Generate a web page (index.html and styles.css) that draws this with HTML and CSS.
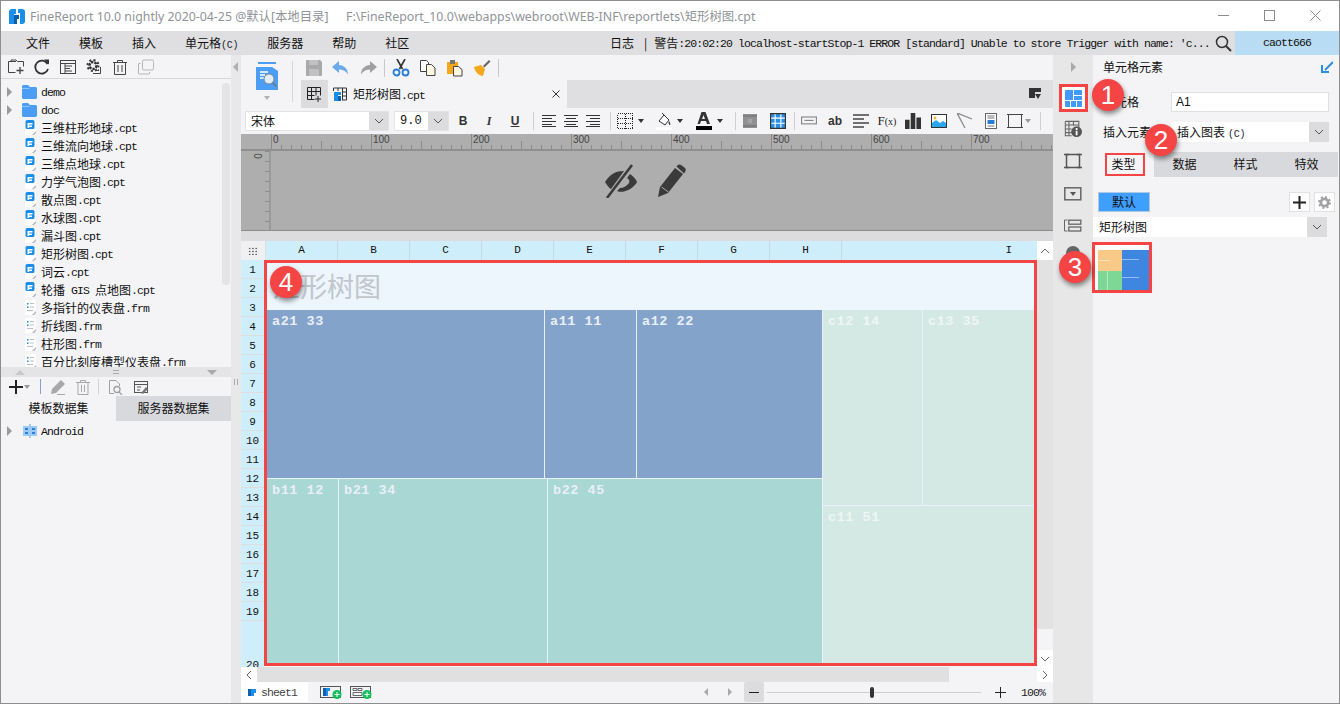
FILE: index.html
```html
<!DOCTYPE html>
<html lang="zh">
<head>
<meta charset="utf-8">
<title>FineReport</title>
<link rel="stylesheet" href="styles.css">
</head>
<body>
<svg class="defs" aria-hidden="true">
  <symbol id="cpt" viewBox="0 0 13 16"><path d="M1 0h11v12l-3 3H1z" fill="#fff"/><path d="M12 11v2l-2 2H8z" fill="#b5b5b5"/><rect x="1.500" y="0" width="9" height="9" rx="1.500" fill="#1a8ee8"/><path d="M3.500 8V3h5v1.500H5.200V5.500H8V7H5.200v1z" fill="#fff"/></symbol>
  <symbol id="frm" viewBox="0 0 13 16"><path d="M1 0h11v12l-3 3H1z" fill="#fff"/><path d="M12 11v2l-2 2H8z" fill="#b5b5b5"/><path d="M3 3h1.500v1.500H3zM3 6.500h1.500V8H3z" fill="#1a8ee8"/><path d="M6 3h4v1H6zM6 6.500h4v1H6zM3 10h6v1H3z" fill="#b9c2cc"/></symbol>
  <symbol id="folder" viewBox="0 0 15 14"><path d="M0 1.500C0 .7.700 0 1.500 0H6l2 2h5.500c.8 0 1.500.7 1.500 1.500V12.500c0 .8-.7 1.500-1.500 1.500h-12C.7 14 0 13.300 0 12.500z" fill="#4c9ef5"/><path d="M0 3h8l-1 1H0z" fill="#90c4fa"/></symbol>
  <symbol id="chev" viewBox="0 0 10 6"><path d="M1 1l4 4 4-4" fill="none" stroke="#555" stroke-width="1"/></symbol>
  <symbol id="tri" viewBox="0 0 6 4"><path d="M0 0h6L3 4z" fill="#333"/></symbol>
  <symbol id="gridplus" viewBox="0 0 16 16"><path d="M1.500 1.500h13v8M1.500 1.500v12h7M1.500 5.500h13M5.500 1.500v12M10 1.500v8M1.500 9.500h7" fill="none" stroke="#222" stroke-width="1"/><path d="M12 10v6M9 13h6" stroke="#222" stroke-width="1"/></symbol>
</svg>
<div class="app">
  <header class="titlebar">
    <svg class="logo" viewBox="0 0 16 15"><path d="M0 3a3 3 0 0 1 3-3h4v5H5v10H0z" fill="#1a8ee8"/><path d="M5 6h5v4H8v5H5z" fill="#0f5fb0"/><path d="M9 0h4a3 3 0 0 1 3 3v9a3 3 0 0 1-3 3h-2V4H9z" fill="#1a8ee8"/></svg>
    <span class="apptitle">FineReport 10.0 nightly 2020-04-25 @默认[本地目录]</span>
    <span class="apppath">F:\FineReport_10.0\webapps\webroot\WEB-INF\reportlets\矩形树图.cpt</span>
    <div class="winbtns">
      <svg viewBox="0 0 11 11"><path d="M0 5.500h11" stroke="#8c8c8c"/></svg>
      <svg viewBox="0 0 11 11"><rect x=".5" y=".5" width="10" height="10" fill="none" stroke="#8c8c8c"/></svg>
      <svg viewBox="0 0 11 11"><path d="M.5.500l10 10M10.500.500l-10 10" stroke="#8c8c8c"/></svg>
    </div>
  </header>

  <nav class="menubar">
    <div class="menu">
      <span>文件</span><span>模板</span><span>插入</span><span>单元格<b class="m10">(C)</b></span><span>服务器</span><span>帮助</span><span>社区</span>
    </div>
    <div class="log">日志<i class="bar">|</i>警告<b class="m logm">:20:02:20 localhost-startStop-1 ERROR [standard] Unable to store Trigger with name: 'c...</b></div>
    <svg class="search" viewBox="0 0 17 17"><circle cx="7" cy="7" r="5.500" fill="none" stroke="#333" stroke-width="1.500"/><path d="M11 11l5 5" stroke="#333" stroke-width="2"/></svg>
    <div class="user m">caott666</div>
  </nav>

  <main class="main">
    <aside class="left">
      <div class="ltools">
        <svg viewBox="0 0 18 18"><path d="M9 3.500H1.500v11h7M4 3.500V2h5l1.500 1.500h6v5" fill="none" stroke="#444"/><path d="M13 9v7M9.500 12.500h7" stroke="#444" stroke-width="1.300"/></svg>
        <svg viewBox="0 0 18 18"><path d="M14.500 6A6.500 6.500 0 1 0 15 11" fill="none" stroke="#333" stroke-width="1.800"/><path d="M11 1.500h5v5z" fill="#333"/></svg>
        <svg viewBox="0 0 18 18"><rect x="1.500" y="2.500" width="15" height="13" fill="none" stroke="#444"/><path d="M1.500 5.500h15M6 8h7M6 10.500h5M6 13h7M6 5.500v10" fill="none" stroke="#444"/></svg>
        <svg viewBox="0 0 18 18"><circle cx="8" cy="7.500" r="3.500" fill="none" stroke="#333" stroke-width="2.500" stroke-dasharray="2.500 1"/><circle cx="8" cy="7.500" r="5.500" fill="none" stroke="#333" stroke-width="2" stroke-dasharray="2 2.300"/><path d="M15.500 9v6.500H8" fill="none" stroke="#444"/><path d="M11 13h3v-2z" fill="#444"/></svg>
        <svg viewBox="0 0 18 18"><path d="M2 4.500h14M6.500 4.500V2.500h5v2M3.500 4.500v12h11v-12M7 7v7M11 7v7" fill="none" stroke="#444"/></svg>
        <svg viewBox="0 0 18 18"><rect x="5.500" y="2" width="11" height="10" rx="1.500" fill="none" stroke="#b5b5b8"/><path d="M3.500 5.500H2A.5.500 0 0 0 1.500 6v9.500a.5.500 0 0 0 .5.500h10a.5.500 0 0 0 .5-.5V14" fill="none" stroke="#b5b5b8"/></svg>
      </div>
      <div class="tree">
        <div class="thumb"></div>
        <div class="row"><i class="arrow"></i><svg class="fold"><use href="#folder"/></svg><b class="m">demo</b></div>
        <div class="row"><i class="arrow"></i><svg class="fold"><use href="#folder"/></svg><b class="m">doc</b></div>
        <div class="row"><svg class="fi"><use href="#cpt"/></svg>三维柱形地球<b class="m">.cpt</b></div>
        <div class="row"><svg class="fi"><use href="#cpt"/></svg>三维流向地球<b class="m">.cpt</b></div>
        <div class="row"><svg class="fi"><use href="#cpt"/></svg>三维点地球<b class="m">.cpt</b></div>
        <div class="row"><svg class="fi"><use href="#cpt"/></svg>力学气泡图<b class="m">.cpt</b></div>
        <div class="row"><svg class="fi"><use href="#cpt"/></svg>散点图<b class="m">.cpt</b></div>
        <div class="row"><svg class="fi"><use href="#cpt"/></svg>水球图<b class="m">.cpt</b></div>
        <div class="row"><svg class="fi"><use href="#cpt"/></svg>漏斗图<b class="m">.cpt</b></div>
        <div class="row"><svg class="fi"><use href="#cpt"/></svg>矩形树图<b class="m">.cpt</b></div>
        <div class="row"><svg class="fi"><use href="#cpt"/></svg>词云<b class="m">.cpt</b></div>
        <div class="row"><svg class="fi"><use href="#cpt"/></svg>轮播<b class="m"> GIS </b>点地图<b class="m">.cpt</b></div>
        <div class="row"><svg class="fi"><use href="#frm"/></svg>多指针的仪表盘<b class="m">.frm</b></div>
        <div class="row"><svg class="fi"><use href="#frm"/></svg>折线图<b class="m">.frm</b></div>
        <div class="row"><svg class="fi"><use href="#frm"/></svg>柱形图<b class="m">.frm</b></div>
        <div class="row"><svg class="fi"><use href="#frm"/></svg>百分比刻度槽型仪表盘<b class="m">.frm</b></div>
      </div>
      <div class="lsplit"><i class="up"></i><i class="dash"></i><i class="down"></i></div>
      <div class="ltools2">
        <svg class="w14" viewBox="0 0 14 14"><path d="M7 0v14M0 7h14" stroke="#222" stroke-width="2"/></svg>
        <svg class="w7" viewBox="0 0 6 4"><path d="M0 0h6L3 4z" fill="#999"/></svg>
        <i class="vsep a"></i>
        <svg class="w16 b" viewBox="0 0 16 16"><path d="M1 15l1-5L11 1l4 4-9 9z" fill="#a8a8ab"/><path d="M7 15.500h8" stroke="#a8a8ab"/></svg>
        <svg class="w16 c" viewBox="0 0 16 16"><path d="M1 3.500h14M5.500 3.500V1.500h5v2M3 3.500v12h10v-12M6.500 6v7M9.500 6v7" fill="none" stroke="#a8a8ab"/></svg>
        <i class="vsep d"></i>
        <svg class="w16 e" viewBox="0 0 16 16"><path d="M9 1.500H2.500v13H7M9 1.500l3.500 3.500v2" fill="none" stroke="#a0a0a3"/><circle cx="10" cy="10.500" r="3" fill="none" stroke="#a0a0a3" stroke-width="1.300"/><path d="M12 13l3 3" stroke="#a0a0a3" stroke-width="1.300"/></svg>
        <svg class="w16 f" viewBox="0 0 16 16"><rect x="1.500" y="2.500" width="13" height="11" fill="none" stroke="#555"/><path d="M1.500 5.500h13M4 8h4M4 11h3" stroke="#555"/><path d="M8 14l5-6 2 2-5 5z" fill="#777"/></svg>
      </div>
      <div class="ltabs"><span class="on">模板数据集</span><span>服务器数据集</span></div>
      <div class="dsrow"><i class="arrow"></i><svg class="ds" viewBox="0 0 14 14"><path d="M7 0v14" stroke="#4c9ef5"/><path d="M0 2h14v10H0z" fill="#9ccbfa"/><path d="M2 4h3v2H2zM2 8h3v2H2zM9 4h3v2H9zM9 8h3v2H9z" fill="#2d7fd8"/></svg><b class="m">Android</b></div>
    </aside>

    <div class="vsplit"><i class="lefttri"></i><i class="grip"></i></div>

    <section class="center">
      <div class="top">
        <div class="bigcol">
          <svg class="bigic" viewBox="0 0 22 28"><path d="M2 0h18v2H2z" fill="#4c9ef5"/><path d="M0 5h16l6 4v19H0z" fill="#4c9ef5"/><path d="M4 10h8M4 13h5M4 16h4" stroke="#fff" stroke-width="1.300"/><circle cx="13" cy="17" r="5" fill="#e3edf5" stroke="#7d8791"/><path d="M16.500 20.500l4 4" stroke="#6d7781" stroke-width="1.500"/></svg>
          <svg class="bigtri" viewBox="0 0 6 4"><path d="M0 0h6L3 4z" fill="#b2b2b5"/></svg>
        </div>
        <i class="bigsep"></i>
        <div class="toprows">
          <div class="tools">
            <svg viewBox="0 0 18 18"><path d="M1 2a1 1 0 0 1 1-1h13l2 2v13a1 1 0 0 1-1 1H2a1 1 0 0 1-1-1z" fill="#a9a9ab"/><path d="M4 1h9v5H4zM4 10h10v7H4z" fill="#c1c1c3"/></svg>
            <svg viewBox="0 0 18 18"><path d="M7 2L0 8l7 6v-3.500c4 0 7 1.500 9 5 0-6-4-9-9-9.500z" fill="#6da9e6"/></svg>
            <svg viewBox="0 0 18 18"><path d="M11 2l7 6-7 6v-3.500c-4 0-7 1.500-9 5 0-6 4-9 9-9.500z" fill="#a0a0a3"/></svg>
            <i class="toolsep"></i>
            <svg viewBox="0 0 18 18"><path d="M5 0l5.500 10M13 0L7.500 10" stroke="#333" stroke-width="1.600"/><circle cx="4.500" cy="13.500" r="3" fill="none" stroke="#2a7dd6" stroke-width="1.800"/><circle cx="13.500" cy="13.500" r="3" fill="none" stroke="#2a7dd6" stroke-width="1.800"/></svg>
            <svg viewBox="0 0 18 18"><path d="M1.500 1.500h6l2 2v9h-8z" fill="#fff" stroke="#444"/><path d="M7.500 5.500h5l3.500 3.500v7.500H7.500z" fill="#fdf6e3" stroke="#444"/></svg>
            <svg viewBox="0 0 18 18"><path d="M1 3h11v12H1z" fill="#f3a81c"/><path d="M4 1h5v4H4z" fill="#777"/><path d="M7.500 7.500h5l3.500 3v6.500H7.500z" fill="#fdf6e3" stroke="#444"/></svg>
            <svg viewBox="0 0 18 18"><path d="M1 8l7-2 4 4-2 7C6 17 2 13 1 8z" fill="#f3a81c"/><path d="M10 7l6-6 1.500 1.500-6 6z" fill="#666"/></svg>
            <i class="toolsep"></i>
          </div>
          <div class="tabs">
            <div class="newtab"><svg><use href="#gridplus"/></svg></div>
            <div class="tab">
              <svg class="tabic" viewBox="0 0 14 14"><path d="M.5 1h13v12H.5zM.5 5h13M.5 9h13M5 1v12M9.500 1v12" fill="none" stroke="#333"/><rect x="0" y="4" width="9" height="10" fill="#f4f4f7"/><path d="M1 14V5h7v3H5v6z" fill="#1a8ee8"/><path d="M5 9h3v5H5z" fill="#0f5fb0"/></svg>
              <span class="tabname">矩形树图<b class="m">.cpt</b></span>
              <svg class="tabx" viewBox="0 0 8 8"><path d="M.5.500l7 7M7.500.500l-7 7" stroke="#333"/></svg>
            </div>
            <svg class="tabmenu" viewBox="0 0 12 12"><path d="M0 0h12v4H6v6H0z" fill="#333"/><path d="M6 6h6l-3 5z" fill="#333"/></svg>
          </div>
        </div>
      </div>

      <div class="format">
        <div class="sel f1"><span>宋体</span><i><svg><use href="#chev"/></svg></i></div>
        <div class="sel f2"><span class="m mono2">9.0</span><i><svg><use href="#chev"/></svg></i></div>
        <span class="c26 txt">B</span>
        <span class="c26 txt it">I</span>
        <span class="c26 txt un">U</span>
        <i class="fsep s10"></i>
        <span class="c22"><svg viewBox="0 0 14 12"><path d="M0 .5h14M0 3.500h10M0 6.500h14M0 9.500h10M0 11.500h14" stroke="#333"/></svg></span>
        <span class="c22"><svg viewBox="0 0 14 12"><path d="M0 .5h14M2 3.500h10M0 6.500h14M2 9.500h10M0 11.500h14" stroke="#333"/></svg></span>
        <span class="c22"><svg viewBox="0 0 14 12"><path d="M0 .5h14M4 3.500h10M0 6.500h14M4 9.500h10M0 11.500h14" stroke="#333"/></svg></span>
        <i class="fsep s12"></i>
        <span class="c18"><svg viewBox="0 0 16 16" shape-rendering="crispEdges"><rect x=".5" y=".5" width="15" height="15" fill="none" stroke="#222" stroke-dasharray="1 1"/><path d="M.5 5.500h15M.5 10.500h15M8 .5v15" stroke="#222" stroke-dasharray="1 1"/></svg></span>
        <span class="c14"><svg class="t"><use href="#tri"/></svg></span>
        <span class="c18 ml7"><svg viewBox="0 0 16 18"><path d="M3 9l5-6 5 5-4 5z" fill="#fff" stroke="#333"/><path d="M6 1l2 2" stroke="#333"/><path d="M13 9c1 2 2 3 1 4-1 0-2-2-1-4z" fill="#333"/><path d="M0 15h16v3H0z" fill="#fff"/></svg></span>
        <span class="c14"><svg class="t"><use href="#tri"/></svg></span>
        <span class="c18 ml8"><svg viewBox="0 0 16 18"><path d="M5.500 0h4L14 12h-3l-1-3H5l-1 3H1.500zM6 7h3L7.500 3z" fill="#333"/><path d="M0 14h16v4H0z" fill="#000"/></svg></span>
        <span class="c14"><svg class="t"><use href="#tri"/></svg></span>
        <i class="fsep s16"></i>
        <span class="c14"><svg viewBox="0 0 14 14"><rect width="14" height="14" fill="#909093"/><path d="M0 2h14M0 12h14" stroke="#6f6f72"/><path d="M5 5h4v4H5z" fill="#a5a5a8"/></svg></span>
        <span class="c28 ml7"><svg viewBox="0 0 14 14"><path d="M0 0h14v14H0z" fill="#2b90e5"/><path d="M0 4.500h14M0 9h14M4.500 0v14M9.500 0v14" stroke="#fff"/><path d="M.5.500h13v13H.5z" fill="none" stroke="#333"/></svg></span>
        <i class="fsep s4"></i>
        <span class="c26"><svg viewBox="0 0 14 8"><rect x=".5" y=".5" width="13" height="6" fill="none" stroke="#888"/><path d="M3 3.500h8" stroke="#888"/></svg></span>
        <span class="c26 txt ab">ab</span>
        <span class="c26"><svg viewBox="0 0 16 14"><path d="M0 1h16M0 5h11M0 9h16M0 13h11" stroke="#444" stroke-width="1.600"/></svg></span>
        <span class="c26 fx">F<small>(x)</small></span>
        <span class="c26"><svg viewBox="0 0 14 14"><path d="M0 6h4v8H0zM5 0h4v14H5zM10 4h4v10h-4z" fill="#333"/></svg></span>
        <span class="c26"><svg viewBox="0 0 16 14"><rect x=".5" y=".5" width="15" height="13" fill="#fdfdfd" stroke="#333"/><path d="M1 13V9l4-3 4 3 3-2 3 2v4z" fill="#2aa7ee"/><circle cx="4" cy="4" r="1.500" fill="#f3b93d"/></svg></span>
        <span class="c26"><svg viewBox="0 0 16 16"><path d="M0 0l15 6M0 0l8 15" fill="none" stroke="#8a8a8c" stroke-width="1.300"/></svg></span>
        <span class="c26"><svg viewBox="0 0 12 16"><rect x=".5" y=".5" width="11" height="15" fill="#fff" stroke="#666"/><path d="M2.500 3h7M2.500 5h7" stroke="#777"/><path d="M2.500 7h7v4h-7z" fill="#2a7dd6"/><path d="M2.500 13h7" stroke="#777"/></svg></span>
        <span class="c30"><svg class="bord" viewBox="0 0 16 16"><rect x="1.500" y="1.500" width="13" height="13" fill="none" stroke="#444"/><path d="M0 1.500h3M13 1.500h3M0 14.500h3M13 14.500h3" stroke="#444"/></svg><svg class="t g" viewBox="0 0 6 4"><path d="M0 0h6L3 4z" fill="#999"/></svg></span>
        <i class="fsep s12"></i>
      </div>

      <div class="ruler">
        <span>0</span><span>100</span><span>200</span><span>300</span><span>400</span><span>500</span><span>600</span><span>700</span>
      </div>
      <div class="page">
        <div class="vruler"><span>0</span></div>
        <div class="pageicons">
          <svg viewBox="0 0 34 34"><path d="M1 18c5-8 11-11 19-11l-13 18c-2-1-4-4-6-7zM13 27c2 1 5 1 7 .5C26 26 31 22 33 18c-1-3-4-6-7-8l-3 4c2 1 3 3 2 5-2 3-6 5-9 5z" fill="#3a3a3a"/><path d="M3 34L28 1" stroke="#3a3a3a" stroke-width="2.500"/></svg>
          <svg viewBox="0 0 30 34"><path d="M0 33l2-10L17 4l8 6L10 29z" fill="#3a3a3a"/><path d="M18.500 2.500a3 3 0 0 1 4.500-1.500l3.500 2.500a3 3 0 0 1 .5 4.500L26 9.500z" fill="#3a3a3a"/><path d="M3.500 23l7 5" stroke="#aeaeae"/></svg>
        </div>
      </div>

      <div class="sheet">
        <div class="headrow">
          <div class="corner"><i></i></div>
          <div class="cols"><span>A</span><span>B</span><span>C</span><span>D</span><span>E</span><span>F</span><span>G</span><span>H</span><span class="last">I</span></div>
          <div class="sb-btn"><svg viewBox="0 0 10 6"><path d="M1 5l4-4 4 4" fill="none" stroke="#666"/></svg></div>
        </div>
        <div class="bodyrow">
          <div class="rows"><span>1</span><span>2</span><span>3</span><span>4</span><span>5</span><span>6</span><span>7</span><span>8</span><span>9</span><span>10</span><span>11</span><span>12</span><span>13</span><span>14</span><span>15</span><span>16</span><span>17</span><span>18</span><span>19</span><span class="tall">20</span></div>
          <div class="chart">
            <div class="ctitle">矩形树图</div>
            <div class="map">
              <div class="mapl">
                <div class="tr1">
                  <div class="n a w277">a21 33</div>
                  <div class="n a w91">a11 11</div>
                  <div class="n a w185">a12 22</div>
                </div>
                <div class="tr2">
                  <div class="n bb w71">b11 12</div>
                  <div class="n bb w208">b21 34</div>
                  <div class="n bb w274">b22 45</div>
                </div>
              </div>
              <div class="mapr">
                <div class="tr3">
                  <div class="n cc w99">c12 14</div>
                  <div class="n cc w111">c13 35</div>
                </div>
                <div class="n cc c51">c11 51</div>
              </div>
            </div>
          </div>
          <div class="vbar"><div class="vtrack"></div><div class="sb-btn dn"><svg viewBox="0 0 10 6"><path d="M1 1l4 4 4-4" fill="none" stroke="#666"/></svg></div></div>
        </div>
        <div class="hbar">
          <div class="hbtn"><svg viewBox="0 0 6 10"><path d="M5 1L1 5l4 4" fill="none" stroke="#666"/></svg></div>
          <div class="htrack"></div>
          <div class="hbtn"><svg viewBox="0 0 6 10"><path d="M1 1l4 4-4 4" fill="none" stroke="#666"/></svg></div>
        </div>
      </div>

      <div class="sheetbar">
        <div class="stab"><svg viewBox="0 0 8 8"><path d="M0 1h3v7H0z" fill="#0f5fb0"/><path d="M3 1h5v4H6v3H3z" fill="#1a8ee8"/></svg><b class="m">sheet1</b></div>
        <svg class="addsheet" viewBox="0 0 22 14"><rect x=".5" y="1.500" width="20" height="11" fill="none" stroke="#555"/><path d="M3 3h3v8H3z" fill="#0f5fb0"/><path d="M6 3h4v3H8v5H6z" fill="#1a8ee8"/><circle cx="17" cy="9.500" r="4.500" fill="#12c05a"/><path d="M17 7v5M14.500 9.500h5" stroke="#fff"/></svg>
        <svg class="addsheet two" viewBox="0 0 22 14"><rect x=".5" y="1.500" width="20" height="11" fill="none" stroke="#555"/><path d="M3 3.500h4v2H3zM8 3.500h4v2H8zM3 7.500h9v3H3z" fill="none" stroke="#666"/><circle cx="17" cy="9.500" r="4.500" fill="#12c05a"/><path d="M17 7v5M14.500 9.500h5" stroke="#fff"/></svg>
        <i class="navl"></i><i class="navr"></i>
        <div class="minus"><i></i></div>
        <div class="slider"><i></i></div>
        <svg class="plus" viewBox="0 0 11 11"><path d="M5.500 0v11M0 5.500h11" stroke="#222"/></svg>
        <b class="m pct">100%</b>
      </div>
    </section>

    <div class="rail">
      <div class="railtop"><i></i></div>
      <div class="railsel"><svg viewBox="0 0 17 17"><path d="M0 1a1 1 0 0 1 1-1h7v10H0zM9 0h7a1 1 0 0 1 1 1v4H9zM9 6h8v4H9zM0 11h5v6H1a1 1 0 0 1-1-1zM6 11h5v6H6zM12 11h5v5a1 1 0 0 1-1 1h-4z" fill="#3f9bf7"/></svg></div>
      <div class="railitem"><svg viewBox="0 0 20 20"><path d="M1.500 1.500h15v7M1.500 1.500v16h7M1.500 5.500h15M5.500 1.500v16M10.500 1.500v5M1.500 10h7M1.500 14h7" fill="none" stroke="#666" stroke-width="1.200"/><circle cx="14" cy="13" r="6" fill="#555"/><path d="M13 12h2v5h-2zM13 9h2v2h-2z" fill="#fff"/></svg></div>
      <div class="railitem"><svg viewBox="0 0 18 18"><rect x="2.500" y="2.500" width="13" height="13" fill="none" stroke="#555" stroke-width="1.500"/><path d="M0 2.500h5M13 2.500h5M0 15.500h5M13 15.500h5" stroke="#555" stroke-width="1.500"/></svg></div>
      <div class="railitem dd"><svg viewBox="0 0 18 14"><rect x=".8" y=".8" width="16" height="12" fill="none" stroke="#666" stroke-width="1.500"/><path d="M6 5h6l-3 4z" fill="#555"/></svg></div>
      <div class="railitem"><svg viewBox="0 0 18 14"><path d="M3.500 1H.5v11h3" fill="none" stroke="#666"/><rect x="4.800" y="1.200" width="12" height="4" fill="none" stroke="#666" stroke-width="1.300"/><rect x="4.800" y="8" width="12" height="4" fill="none" stroke="#666" stroke-width="1.300"/></svg></div>
      <div class="railitem peek"><svg viewBox="0 0 18 18"><circle cx="9" cy="9" r="7" fill="#666"/></svg></div>
    </div>

    <aside class="right">
      <div class="rhead"><span>单元格元素</span><svg viewBox="0 0 12 12"><path d="M12 1L4 9M1 4v7h7" fill="none" stroke="#2d8ee8" stroke-width="2"/></svg></div>
      <div class="rform">
        <label>单元格</label><div class="inp">A1</div>
      </div>
      <div class="rform two">
        <label>插入元素</label><div class="inpsel"><span>插入图表<b class="m10 sp">(C)</b></span><i><svg><use href="#chev"/></svg></i></div>
      </div>
      <div class="rtabs"><span class="on">类型</span><span>数据</span><span>样式</span><span>特效</span><em class="redbox"></em></div>
      <div class="rbtns">
        <div class="deflt">默认</div>
        <div class="sq"><svg viewBox="0 0 13 13"><path d="M6.500 0v13M0 6.500h13" stroke="#222" stroke-width="2"/></svg></div>
        <div class="sq"><svg viewBox="0 0 14 14"><circle cx="7" cy="7" r="4" fill="none" stroke="#a2a2a5" stroke-width="3"/><circle cx="7" cy="7" r="6" fill="none" stroke="#a2a2a5" stroke-width="2" stroke-dasharray="2.200 2.500"/></svg></div>
      </div>
      <div class="tsel"><span>矩形树图</span><i><svg><use href="#chev"/></svg></i></div>
      <div class="thumbnail">
        <svg viewBox="0 0 51 40"><path d="M0 0h24v21H0z" fill="#f8c987"/><path d="M0 21h24v19H0z" fill="#7dd896"/><path d="M24 0h27v40H24z" fill="#3e86e0"/><path d="M0 10.500h12M9.500 21v19M24 9.500h17M24 27.500h17" stroke="#fff" stroke-opacity=".45"/></svg>
      </div>
    </aside>
  </main>

  <div class="badge b1">1</div>
  <div class="badge b2">2</div>
  <div class="badge b3">3</div>
  <div class="badge b4">4</div>
</div>
</body>
</html>
```
FILE: styles.css
```css
* { box-sizing: border-box; }
html, body { margin: 0; padding: 0; }
body { width: 1340px; height: 704px; overflow: hidden; background: #fff; font: 12px/1.2 "Noto Sans CJK SC", "Noto Sans", sans-serif; color: #111; }
i, em { font-style: normal; display: block; }
svg { display: block; }
.defs { position: absolute; width: 0; height: 0; }
.m { font: 400 11.500px "Liberation Mono", "Noto Sans CJK SC", monospace; letter-spacing: -.9px; white-space: pre; }
.m10 { font: 400 10px "Liberation Mono", monospace; letter-spacing: -.3px; color: #223; white-space: pre; }
.sp { margin-left: 3px; }

.app { position: relative; width: 1340px; height: 704px; border: 1px solid #8e8e8e; display: flex; flex-direction: column; background: #f4f4f7; }

.titlebar { height: 30px; background: #fff; display: flex; align-items: center; flex: none; }
.logo { width: 16px; height: 15px; margin-left: 8px; }
.apptitle { margin-left: 5px; font: 12.350px "Noto Sans", "Noto Sans CJK SC", sans-serif; color: #8f9499; white-space: nowrap; width: 316px; }
.apppath { font: 12.350px "Noto Sans", "Noto Sans CJK SC", sans-serif; color: #8f9499; white-space: nowrap; }
.winbtns { margin-left: auto; display: flex; gap: 35px; padding-right: 18px; }
.winbtns svg { width: 11px; height: 11px; margin-top: -1px; }

.menubar { height: 24px; background: #dfdfe1; display: flex; align-items: center; flex: none; }
.menu { display: flex; gap: 29px; padding-left: 25px; font-size: 12px; width: 609px; }
.log { width: 600px; white-space: nowrap; display: flex; }
.log .bar { margin: 0 7px 0 10px; }
.logm { letter-spacing: -.93px; line-height: 15px; }
.search { width: 17px; height: 17px; margin-left: 5px; }
.user { margin-left: 3px; width: 104px; height: 24px; line-height: 24px; background: #b8dcf3; text-align: center; }

.main { position: relative; flex: 1; display: flex; min-height: 0; }

/* left */
.left { width: 230px; display: flex; flex-direction: column; flex: none; background: #f4f4f7; }
.ltools { height: 24px; display: flex; gap: 8px; padding: 3px 0 0 6px; border-bottom: 1px solid #d8d8db; flex: none; }
.ltools svg { width: 18px; height: 18px; }
.tree { position: relative; height: 288px; overflow: hidden; padding-top: 4px; flex: none; }
.thumb { position: absolute; left: 221px; top: 4px; width: 8px; height: 202px; border-radius: 4px; background: #e4e4e6; }
.row { height: 18px; display: flex; align-items: center; padding: 1px 0 0 40px; position: relative; white-space: nowrap; }
.row .arrow { position: absolute; left: 6px; top: 4px; }
.arrow { width: 0; height: 0; border-left: 5px solid #9a9a9d; border-top: 5px solid transparent; border-bottom: 5px solid transparent; }
.fold { width: 15px; height: 14px; position: absolute; left: 21px; top: 2px; }
.fi { width: 13px; height: 16px; position: absolute; left: 23px; top: 1px; }
.lsplit { height: 10px; background: #e4e4e6; display: flex; align-items: center; justify-content: space-between; padding: 0 14px; flex: none; }
.lsplit .up { width: 0; height: 0; border: 5px solid transparent; border-top: 0; border-bottom: 5px solid #c8c8cb; }
.lsplit .down { width: 0; height: 0; border: 5px solid transparent; border-bottom: 0; border-top: 5px solid #a9a9ac; }
.lsplit .dash { width: 6px; height: 4px; border-top: 1px solid #aaa; border-bottom: 1px solid #aaa; }
.ltools2 { height: 19px; display: flex; align-items: center; padding-left: 8px; flex: none; }
.w14 { width: 14px; height: 14px; }
.w7 { width: 6px; height: 4px; margin-left: 1px; }
.w16 { width: 16px; height: 16px; }
.vsep { width: 1px; height: 15px; background: #d2d2d5; }
.vsep.a { margin-left: 10px; }
.w16.b { margin-left: 9px; }
.w16.c { margin-left: 9px; }
.vsep.d { margin-left: 7px; }
.w16.e { margin-left: 8px; }
.w16.f { margin-left: 10px; }
.ltabs { height: 25px; display: flex; flex: none; font-size: 12px; }
.ltabs span { width: 115px; display: flex; align-items: center; justify-content: center; background: #d8d9dd; }
.ltabs .on { background: #f4f4f7; }
.dsrow { position: relative; height: 20px; padding-left: 40px; display: flex; align-items: center; }
.dsrow .arrow { position: absolute; left: 6px; top: 5px; }
.ds { width: 14px; height: 14px; position: absolute; left: 22px; top: 3px; }

.vsplit { width: 10px; background: #e8e8e8; position: relative; flex: none; }
.lefttri { position: absolute; left: 2px; top: 7px; width: 0; height: 0; border: 5px solid transparent; border-left: 0; border-right: 5px solid #b0b0b3; }
.grip { position: absolute; left: 3px; top: 324px; width: 4px; height: 6px; border-left: 1px solid #aaa; border-right: 1px solid #aaa; }

/* center */
.center { width: 812px; display: flex; flex-direction: column; flex: none; background: #f4f4f7; }
.top { height: 53px; display: flex; flex: none; }
.bigcol { width: 51px; display: flex; flex-direction: column; align-items: center; padding-top: 7px; flex: none; }
.bigic { width: 22px; height: 28px; }
.bigtri { width: 6px; height: 4px; margin-top: 6px; }
.bigsep { width: 1px; height: 41px; background: #d6d6d9; margin-top: 6px; flex: none; }
.toprows { flex: 1; margin-left: 8px; display: flex; flex-direction: column; min-width: 0; }
.tools { height: 25px; display: flex; align-items: center; gap: 5px; padding-left: 2px; flex: none; }
.tools svg { width: 18px; height: 18px; margin: 0 2px; }
.toolsep { width: 1px; height: 18px; background: #c9c9cc; }
.tabs { height: 28px; background: #dfdfe2; display: flex; align-items: center; flex: none; }
.newtab { width: 26px; height: 28px; background: #dcdcdf; display: flex; align-items: center; justify-content: center; }
.newtab svg { width: 16px; height: 16px; }
.tab { width: 239px; margin-left: 1px; height: 28px; background: #f4f4f7; display: flex; align-items: center; padding-left: 5px; }
.tabic { width: 14px; height: 14px; }
.tabname { margin-left: 6px; flex: 1; }
.tabx { width: 8px; height: 8px; margin-right: 7px; }
.tabmenu { width: 12px; height: 12px; margin-left: auto; margin-right: 12px; }

.format { height: 26px; display: flex; align-items: center; padding-left: 4px; flex: none; }
.sel { display: flex; height: 20px; background: #fff; border: 1px solid #e2e2e4; }
.sel span { flex: 1; padding-left: 5px; line-height: 18px; font-size: 12px; }
.sel i { background: #dcdcdf; display: flex; align-items: center; justify-content: center; }
.sel i svg, .inpsel i svg, .tsel i svg { width: 10px; height: 6px; }
.f1 { width: 144px; }
.f1 i { width: 19px; }
.f2 { width: 55px; margin-left: 5px; margin-right: 1px; }
.f2 i { width: 20px; }
.mono2 { letter-spacing: 0; }
.c26, .c22, .c18, .c14, .c28, .c30 { display: flex; align-items: center; justify-content: center; flex: none; height: 22px; }
.c26 { width: 26px; }
.c22 { width: 22px; }
.c18 { width: 18px; }
.c14 { width: 14px; }
.c28 { width: 28px; }
.c30 { width: 30px; }
.c26 svg { width: 16px; height: 16px; }
.c22 svg { width: 14px; height: 12px; }
.c18 svg { width: 16px; height: 18px; }
.c14 svg { width: 14px; height: 14px; }
.c14 svg.t { width: 6px; height: 4px; }
.c28 svg { width: 16px; height: 16px; }
.bord { width: 16px; height: 16px; }
.c30 .t { width: 6px; height: 4px; margin-left: 2px; }
.txt { font: 700 12px "Liberation Sans", sans-serif; color: #333; }
.it { font: italic 700 12px "Liberation Serif", serif; }
.un { text-decoration: underline; }
.ab { font-size: 12px; }
.fx { font: 13px "Liberation Serif", serif; color: #222; }
.fx small { font-size: 10px; }
.fsep { width: 1px; height: 18px; background: #d0d0d3; flex: none; }
.s10 { margin: 0 4.500px; }
.s12 { margin: 0 5.500px; }
.s16 { margin: 0 7.500px; }
.s4 { margin: 0 1.500px; }
.ml7 { margin-left: 7px; }
.ml8 { margin-left: 8px; }

.ruler { height: 17px; display: flex; padding-left: 30px; flex: none; overflow: hidden; border-bottom: 2px solid #8f8f8f; background-color: #aeaeae;
  background-image:
    repeating-linear-gradient(90deg, #8a8a8a 0 1px, transparent 1px 100px),
    repeating-linear-gradient(90deg, #8a8a8a 0 1px, transparent 1px 50px),
    repeating-linear-gradient(90deg, #8a8a8a 0 1px, transparent 1px 10px);
  background-size: 100% 15px, 100% 8px, 100% 4px;
  background-position: 30px 0, 30px 100%, 30px 100%;
  background-repeat: no-repeat; }
.ruler span { width: 100px; flex: none; padding-left: 2px; font: 10px/11px "Liberation Sans", sans-serif; color: #444; }
.page { height: 80px; background: #aeaeae; border-bottom: 1px solid #8d8d8d; display: flex; flex: none; }
.vruler { width: 17px; margin-left: 13px; border-right: 2px solid #999; position: relative; height: 79px; flex: none;
  background-image: repeating-linear-gradient(180deg, #8a8a8a 0 1px, transparent 1px 10px); background-size: 4px 100%; background-repeat: no-repeat; background-position: 100% 0; }
.vruler span { position: absolute; left: 0; top: 0; font: 10px/10px "Liberation Sans", sans-serif; color: #444; transform: rotate(90deg); }
.pageicons { margin-left: 333px; display: flex; gap: 20px; padding-top: 13px; }
.pageicons svg { width: 34px; height: 34px; }
.pageicons svg + svg { width: 30px; }

.sheet { margin-top: 10px; height: 441px; display: flex; flex-direction: column; flex: none; position: relative; }
.sheet::before { content: ""; position: absolute; left: 0; right: 0; top: -10px; height: 10px; background: #dcdcde; }
.headrow { height: 19px; display: flex; flex: none; }
.corner { width: 25px; background: #f0f0f2; display: flex; align-items: center; justify-content: center; border-right: 1px solid #ddd; }
.corner i { width: 10px; height: 8px; background-image: radial-gradient(#666 1px, transparent 1.200px); background-size: 3.300px 3px; }
.cols { flex: 1; display: flex; background: #cfeefb; }
.cols span { width: 72px; flex: none; text-align: center; font: 400 11px/19px "Liberation Mono", monospace; border-right: 1px solid #c3d9e3; }
.cols .last { flex: 1; border: 0; text-align: right; padding-right: 25px; }
.sb-btn { width: 16px; height: 19px; background: #fff; display: flex; align-items: center; justify-content: center; flex: none; }
.sb-btn svg { width: 10px; height: 6px; }
.bodyrow { height: 407px; display: flex; flex: none; position: relative; }
.rows { width: 23px; overflow: hidden; background: #cfeefb; flex: none; }
.rows span { display: block; height: 19px; text-align: center; font: 11px/20px "Liberation Mono", monospace; border-bottom: 1px solid #dedede; }
.rows .tall { height: 80px; line-height: 88px; border: 0; }
.chart { width: 773px; height: 406px; border: 3px solid #f44444; background: #edf5fd; flex: none; display: flex; flex-direction: column; }
.ctitle { height: 47px; flex: none; padding-left: 6px; font-size: 27px; line-height: 46px; color: #c0c6cc; white-space: nowrap; }
.map { height: 353px; display: flex; gap: 1px; background: #e8f1f8; }
.mapl { width: 555px; display: flex; flex-direction: column; gap: 1px; }
.mapr { width: 211px; display: flex; flex-direction: column; gap: 1px; }
.tr1 { height: 168px; display: flex; gap: 1px; flex: none; }
.tr2 { height: 184px; display: flex; gap: 1px; flex: none; }
.tr3 { height: 195px; display: flex; gap: 1px; flex: none; }
.n { padding: 4px 0 0 5px; font: 700 13.500px/15px "Liberation Mono", monospace; letter-spacing: .55px; color: #e8eff8; white-space: pre; }
.a { background: #84a3cb; }
.bb { background: #a8d7d4; }
.cc { background: #d5e9e4; color: #eef6f5; }
.c51 { height: 157px; }
.w277 { width: 277px; }
.w91 { width: 91px; }
.w185 { width: 185px; }
.w71 { width: 71px; }
.w208 { width: 208px; }
.w274 { width: 274px; }
.w99 { width: 99px; }
.w111 { width: 111px; }
.vbar { width: 16px; height: 407px; background: #f4f4f7; display: flex; flex-direction: column; flex: none; }
.vtrack { height: 369px; background: #e2e2e2; }
.dn { margin-top: auto; height: 17px; }
.hbar { height: 15px; display: flex; flex: none; background: #f4f4f7; }
.hbtn { width: 16px; background: #fff; display: flex; align-items: center; justify-content: center; flex: none; }
.hbtn svg { width: 6px; height: 10px; }
.htrack { width: 692px; background: #e0e0e0; }
.hbar .hbtn:last-child { margin-left: auto; }

.sheetbar { height: 20px; display: flex; align-items: center; flex: none; }
.stab { width: 67px; height: 20px; background: #fff; display: flex; align-items: center; padding-left: 7px; gap: 5px; flex: none; }
.stab svg { width: 8px; height: 8px; }
.stab .m { color: #444; }
.addsheet { width: 22px; height: 14px; margin-left: 12px; flex: none; }
.addsheet.two { margin-left: 8px; }
.navl { margin-left: 332px; width: 0; height: 0; border: 4px solid transparent; border-left: 0; border-right: 4px solid #a9a9ac; flex: none; }
.navr { margin-left: 20px; width: 0; height: 0; border: 4px solid transparent; border-right: 0; border-left: 4px solid #a9a9ac; flex: none; }
.minus { margin-left: 12px; width: 20px; height: 20px; background: #dcdcdf; border-radius: 2px; display: flex; align-items: center; justify-content: center; flex: none; }
.minus i { width: 10px; height: 1px; background: #222; }
.slider { margin-left: 3px; width: 214px; height: 1px; background: #cfcfd2; position: relative; flex: none; }
.slider i { position: absolute; left: 103px; top: -5px; width: 4px; height: 11px; border-radius: 2px; background: #333; }
.plus { width: 11px; height: 11px; margin-left: 14px; flex: none; }
.pct { margin-left: 15px; color: #222; }

/* rail */
.rail { width: 40px; background: #e7e7e7; display: flex; flex-direction: column; align-items: center; flex: none; }
.railtop { height: 24px; display: flex; align-items: center; justify-content: center; flex: none; margin-bottom: 5px; }
.railtop i { width: 0; height: 0; border: 5px solid transparent; border-right: 0; border-left: 5px solid #a9a9ac; }
.railsel { width: 29px; height: 28px; background: #fff; border: 3px solid #f44444; display: flex; align-items: center; justify-content: center; flex: none; }
.railsel svg { width: 17px; height: 17px; }
.railitem { height: 32px; display: flex; align-items: center; justify-content: center; flex: none; }
.railitem svg { width: 18px; height: 18px; }
.railsel + .railitem { margin-top: 1px; }
.railitem.dd { margin-top: 1px; }
.railitem.peek { margin-top: -5px; }

/* right */
.right { flex: 1; display: flex; flex-direction: column; background: #f4f4f7; min-width: 0; }
.rhead { height: 24px; display: flex; align-items: center; justify-content: space-between; padding: 0 6px 0 10px; flex: none; }
.rhead svg { width: 12px; height: 12px; }
.rform { height: 20px; margin-top: 13px; display: flex; align-items: center; padding-left: 10px; flex: none; }
.rform.two { margin-top: 10px; }
.rform label { width: 68px; flex: none; white-space: nowrap; }
.inp { width: 158px; height: 20px; background: #fff; border: 1px solid #e0e0e2; padding-left: 4px; font: 12px/18px "Liberation Sans", sans-serif; }
.inpsel { width: 158px; height: 20px; background: #fff; display: flex; }
.inpsel span { flex: 1; padding-left: 6px; line-height: 19px; }
.inpsel i, .tsel i { width: 20px; background: #dcdcdf; display: flex; align-items: center; justify-content: center; flex: none; }
.rtabs { position: relative; height: 25px; margin-top: 10px; display: flex; flex: none; background: #d8d9dd; margin-right: 1px; }
.rtabs span { width: 61px; padding-bottom: 1px; display: flex; align-items: center; justify-content: center; font-size: 12px; flex: none; }
.rtabs .on { background: #f4f4f7; }
.redbox { position: absolute; left: 12px; top: 1px; width: 40px; height: 23px; border: 2px solid #f44444; }
.rbtns { height: 20px; margin-top: 15px; display: flex; padding-left: 5px; flex: none; }
.deflt { width: 52px; height: 20px; background: #3f9fff; border: 1px solid #b0c8e0; text-align: center; line-height: 17px; font-size: 12px; }
.sq { width: 21px; height: 20px; background: #fff; border: 1px solid #e2e2e4; display: flex; align-items: center; justify-content: center; margin-left: 4px; }
.deflt + .sq { margin-left: 139px; }
.sq svg { width: 13px; height: 13px; }
.tsel { height: 20px; width: 234px; margin-top: 5px; background: #fff; display: flex; flex: none; }
.tsel span { flex: 1; padding-left: 6px; line-height: 19px; }
.thumbnail { width: 60px; height: 51px; margin-top: 5px; margin-left: -1px; border: 3px solid #f44444; background: #fff; padding: 5px 0 0 3px; flex: none; }
.thumbnail svg { width: 51px; height: 40px; }

.badge { position: absolute; width: 32px; height: 32px; border-radius: 50%; background: #f44444; color: #fff; text-align: center; font: 26px/32px "Liberation Sans", sans-serif; box-shadow: 1px 3px 5px rgba(0,0,0,.45); }
.b1 { left: 1091px; top: 78px; }
.b2 { left: 1144px; top: 123px; }
.b3 { left: 1058px; top: 250px; }
.b4 { left: 269px; top: 265px; }
```
